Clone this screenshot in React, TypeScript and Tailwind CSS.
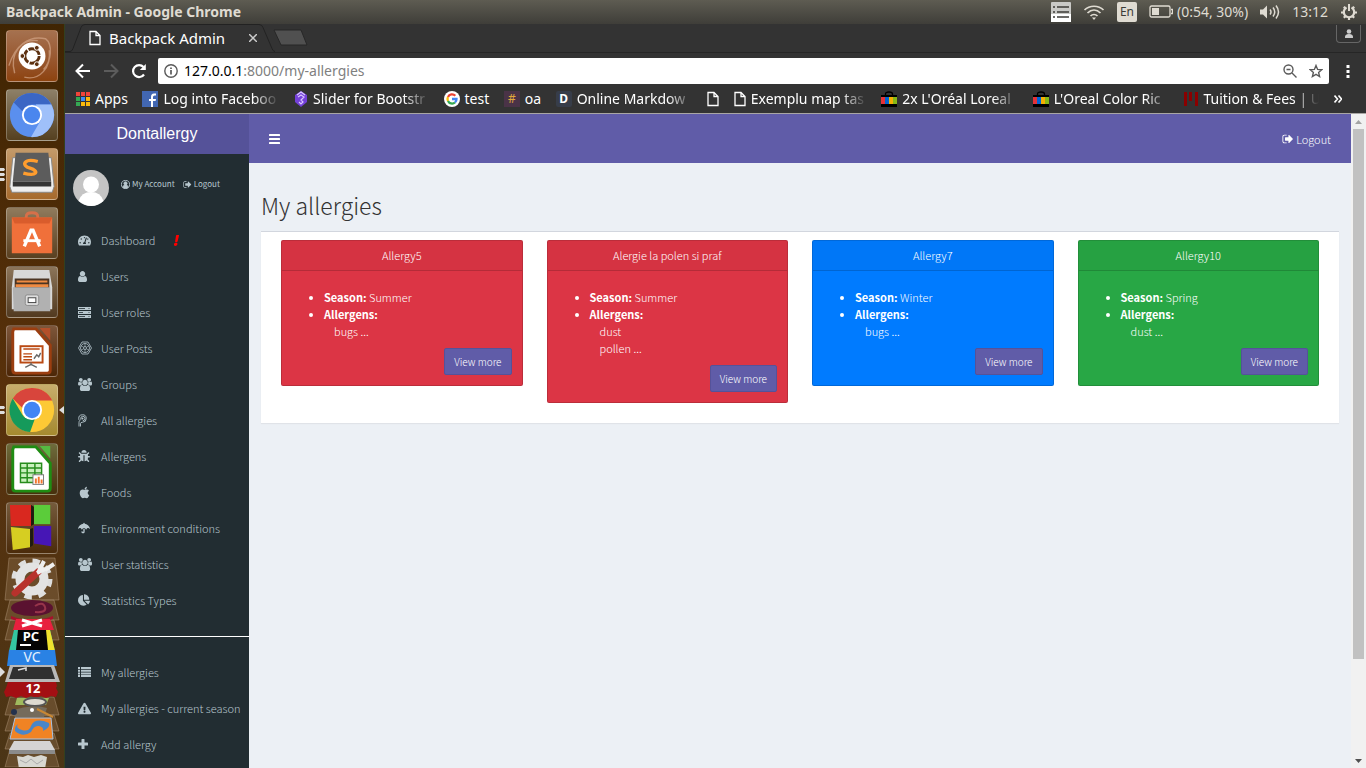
import type { ReactNode } from 'react';
import {
  FaApple,
  FaBug,
  FaChartPie,
  FaExclamation,
  FaExclamationTriangle,
  FaTachometerAlt,
  FaUmbrella,
} from 'react-icons/fa';

const SOURCE = "font-['Noto_Sans_CJK_SC','Noto_Sans',sans-serif]";

/* ---------- glyphs ---------- */

const SignOutIcon = ({ className }: { className: string }) => (
  <svg viewBox="0 0 1792 1792" className={className} fill="currentColor" aria-hidden="true">
    <path d="M704 1440q0 4 1 20t.5 26.5-3 23.5-10 19.5-20.5 6.5h-320q-119 0-203.5-84.5t-84.5-203.5v-704q0-119 84.5-203.5t203.5-84.5h320q13 0 22.5 9.5t9.5 22.5q0 4 1 20t.5 26.5-3 23.5-10 19.5-20.5 6.5h-320q-66 0-113 47t-47 113v704q0 66 47 113t113 47h312l11.5 1 11.5 3 8 5.5 7 9 2 13.5zm928-544q0 26-19 45l-544 544q-19 19-45 19t-45-19-19-45v-288h-448q-26 0-45-19t-19-45v-384q0-26 19-45t45-19h448v-288q0-26 19-45t45-19 45 19l544 544q19 19 19 45z" />
  </svg>
);

const PersonIcon = () => (
  <svg viewBox="256 128 1280 1536" width="9" height="11" fill="currentColor" aria-hidden="true">
    <path d="M1536 1399q0 109-62.5 187t-150.5 78h-854q-88 0-150.5-78t-62.5-187q0-85 8.5-160.5t31.500-152 58.500-131 94-89 134.500-34.500q131 128 313 128t313-128q76 0 134.500 34.500t94 89 58.500 131 31.500 152 8.500 160.500zm-256-887q0 159-112.500 271.500t-271.500 112.500-271.500-112.500-112.500-271.500 112.500-271.500 271.500-112.500 271.500 112.500 112.500 271.500z" />
  </svg>
);

const GroupIcon = () => (
  <svg viewBox="0 0 1920 1792" width="14" height="13" fill="currentColor" aria-hidden="true">
    <path d="M593 896q-162 5-265 128h-134q-82 0-138-40.5t-56-118.5q0-353 124-353 6 0 43.5 21t97.5 42.5 119 21.5q67 0 133-23-5 37-5 66 0 159 81 256zm1071 637q0 120-73 189.5t-194 69.5h-874q-121 0-194-69.5t-73-189.5q0-53 3.5-103.5t14-109 26.5-108.5 43-97.5 62-81 85.5-53.5 111.5-20q10 0 43 21.5t73 48 107 48 135 21.5 135-21.5 107-48 73-48 43-21.5q61 0 111.5 20t85.5 53.5 62 81 43 97.5 26.5 108.5 14 109 3.5 103.5zm-1024-1277q0 106-75 181t-181 75-181-75-75-181 75-181 181-75 181 75 75 181zm704 384q0 159-112.5 271.5t-271.5 112.5-271.5-112.5-112.5-271.5 112.5-271.5 271.5-112.5 271.5 112.5 112.5 271.5zm576 225q0 78-56 118.5t-138 40.5h-134q-103-123-265-128 93-128 93-287 0-29-5-66 66 23 133 23 59 0 119-21.5t97.5-42.5 43.5-21q124 0 124 353zm-128-609q0 106-75 181t-181 75-181-75-75-181 75-181 181-75 181 75 75 181z" />
  </svg>
);

const OrderIcon = () => (
  <svg viewBox="0 0 28 28" width="14" height="14" fill="none" stroke="currentColor" strokeWidth="1.600" aria-hidden="true">
    <path d="M8 2h12l7 12-7 12H8L1 14z" />
    <circle cx="14" cy="14" r="9" />
    <circle cx="14" cy="14" r="3" />
    <path d="M14 5v6M14 17v6M6 10l5 2M17 16l5 2M6 18l5-2M17 12l5-2" strokeWidth="1.200" />
  </svg>
);

const PiperIcon = () => (
  <svg viewBox="0 0 18 26" width="9" height="13" fill="none" stroke="currentColor" strokeWidth="1.800" aria-hidden="true">
    <path d="M2 25v-8q0-3 2-4M5 25v-6q0-2.500 4-2.500a7.500 7.500 0 1 0-7.500-7q0 2 1.500 3.500" />
    <path d="M5.500 11.500q-1-7 4-7 4.500 0 4.500 4.500t-4.500 4.500" />
    <circle cx="9" cy="9" r="2" fill="currentColor" stroke="none" />
  </svg>
);

const ServerIcon = () => (
  <svg viewBox="0 0 13 11" width="13" height="11" fill="currentColor" aria-hidden="true">
    <path d="M0 0h13v3H0zM0 4h13v3H0zM0 8h13v3H0z" />
    <path d="M1 1.500h6M1 5.500h4M1 9.500h6M10.500 1.500h1M10.500 5.500h1M10.500 9.500h1" stroke="#222d32" strokeWidth=".8" />
  </svg>
);

const ListIcon = () => (
  <svg viewBox="0 0 13 10" width="13" height="10" fill="currentColor" aria-hidden="true">
    <path d="M0 0h2v2H0zM3 0h10v2H3zM0 2.700h2v2H0zM3 2.700h10v2H3zM0 5.400h2v2H0zM3 5.400h10v2H3zM0 8h2v2H0zM3 8h10v2H3z" />
  </svg>
);

const PlusIcon = () => (
  <svg viewBox="0 0 10 10" width="10" height="10" fill="currentColor" aria-hidden="true">
    <path d="M4 0h2q.5 0 .5.500v3h3q.5 0 .5.500v2q0 .5-.5.500h-3v3q0 .5-.5.500H4q-.5 0-.5-.5v-3h-3Q0 6.500 0 6V4q0-.5.500-.5h3v-3Q3.500 0 4 0z" />
  </svg>
);

const BarsIcon = () => (
  <svg viewBox="0 0 11 10" width="11" height="10" fill="currentColor" aria-hidden="true">
    <rect width="11" height="2" rx=".5" />
    <rect y="4" width="11" height="2" rx=".5" />
    <rect y="8" width="11" height="2" rx=".5" />
  </svg>
);

const AccountIcon = () => (
  <svg viewBox="0 0 20 20" width="9" height="9" fill="none" stroke="currentColor" strokeWidth="2" aria-hidden="true">
    <circle cx="10" cy="10" r="9" />
    <circle cx="10" cy="7.500" r="3.500" fill="currentColor" />
    <path d="M4 16c1-4 3-5 6-5s5 1 6 5c-3 3-9 3-12 0z" fill="currentColor" />
  </svg>
);

const PageIcon = () => (
  <svg viewBox="0 0 12 16" width="12" height="16" fill="none" stroke="#fff" strokeWidth="1.300" aria-hidden="true">
    <path d="M1 1.500h6l4 4v9H1zM7 1.500v4h4" />
  </svg>
);

/* ---------- system panel ---------- */

function SystemPanel() {
  return (
    <header className="flex h-6 shrink-0 items-center justify-between bg-linear-to-b from-[#5e5c52] to-[#3f3e39] pr-2 pl-[6px] font-['Noto_Sans',sans-serif] text-[#dfdbd2]">
      <span className="text-[14px] leading-6 font-bold">Backpack Admin - Google Chrome</span>
      <div className="flex items-center text-[14px] leading-6">
        <svg viewBox="0 0 20 20" width="20" height="20" aria-hidden="true">
          <rect width="20" height="20" rx="1" fill="#c9c9c6" />
          <rect y="12" width="20" height="8" fill="#fff" />
          <path d="M2 5h2M2 10h2M2 15h2M6 5h12M6 10h12M6 15h12" stroke="#3c3b37" strokeWidth="1.300" />
        </svg>
        <svg viewBox="0 0 22 16" width="22" height="16" className="ml-3" fill="none" stroke="#dfdbd2" strokeWidth="1.700" aria-hidden="true">
          <path d="M1.500 6c5-5 14-5 19 0M4.500 9c4-4 9-4 13 0M7.500 12c2-2 5-2 7 0" />
          <path d="M9 13.500h4L11 16z" fill="#dfdbd2" stroke="none" />
        </svg>
        <span className="ml-3 flex h-5 w-5 items-center justify-center rounded-xs bg-[#dfdbd2] text-[12px] text-[#3c3b37]">En</span>
        <svg viewBox="0 0 24 14" width="24" height="14" className="ml-3" fill="none" stroke="#dfdbd2" strokeWidth="1.300" aria-hidden="true">
          <rect x="1" y="1" width="20" height="11" rx="1.500" />
          <path d="M22 4.500h1.500v4H22" />
          <rect x="3" y="3" width="7" height="7" fill="#dfdbd2" stroke="none" />
        </svg>
        <span className="ml-1">(0:54, 30%)</span>
        <svg viewBox="0 0 20 16" width="20" height="16" className="ml-3" fill="none" stroke="#dfdbd2" strokeWidth="1.500" aria-hidden="true">
          <path d="M0 5.500h3l4-4v13l-4-4H0z" fill="#dfdbd2" stroke="none" />
          <path d="M10 5.500q2 2.500 0 5M13 3.500q3.500 4.500 0 9M16 1.500q5 6.500 0 13" />
        </svg>
        <span className="ml-3">13:12</span>
        <svg viewBox="0 0 18 18" width="18" height="18" className="ml-3" fill="none" stroke="#dfdbd2" aria-hidden="true">
          <path d="M6.500 4.500a5.200 5.200 0 1 0 5 0" strokeWidth="2.200" />
          <path d="M9 1v7" strokeWidth="2" />
          <path d="M3.800 3.800l1.700 1.700M14.200 3.800l-1.700 1.700M1 9.500h2.500M14.500 9.500H17M3.800 14.800l1.700-1.700M14.200 14.800l-1.700-1.700M9 14.500V17" strokeWidth="2.200" />
        </svg>
      </div>
    </header>
  );
}

/* ---------- launcher ---------- */

type TileProps = { tint: string; label: string; children: ReactNode; active?: boolean; windows?: number };

function Tile({ tint, label, children, active = false, windows = 0 }: TileProps) {
  return (
    <button type="button" aria-label={label} className={`relative h-[52px] w-[52px] shrink-0 rounded border border-white/25 bg-linear-to-b ${tint}`}>
      <svg viewBox="0 0 52 52" width="50" height="50">
        {children}
      </svg>
      {windows > 0 && (
        <span className="absolute top-0 -left-[7px] flex h-full flex-col justify-center gap-[2px]">
          {Array.from({ length: windows }, (_, i) => (
            <svg key={i} viewBox="0 0 5 3" width="5" height="3" aria-hidden="true">
              <path d="M0 0h4l1 1.500L4 3H0z" fill="#ddd" />
            </svg>
          ))}
        </span>
      )}
      {active && (
        <svg viewBox="0 0 5 8" width="5" height="8" className="absolute top-[21px] -right-[7px]" aria-hidden="true">
          <path d="M5 0v8L0 4z" fill="#ddd" />
        </svg>
      )}
    </button>
  );
}

function Launcher() {
  return (
    <aside className="flex w-[65px] shrink-0 flex-col items-center gap-[7px] overflow-hidden border-r border-[#33401f] bg-linear-to-b from-[#402503] via-[#59310b] to-[#4b3516] pt-[6px] pr-px">
      <Tile label="Dash" tint="from-[#a5714f] to-[#8d430e]">
        <path d="M2 36C8 16 22 4 40 8c8 6 6 24-2 32M8 44C2 22 16 8 32 10M18 48c16 4 28-10 26-28" stroke="#d3a588" strokeWidth="1.500" fill="none" opacity=".7" />
        <circle cx="26" cy="26" r="14" fill="#fff" />
        <circle cx="26" cy="26" r="7.500" fill="none" stroke="#5c3010" strokeWidth="3" strokeDasharray="14.200 1.500" />
        <circle cx="16" cy="26" r="2.500" fill="#5c3010" stroke="#fff" />
        <circle cx="31" cy="17.500" r="2.500" fill="#5c3010" stroke="#fff" />
        <circle cx="31" cy="34.500" r="2.500" fill="#5c3010" stroke="#fff" />
      </Tile>
      <Tile label="Chromium" tint="from-[#8d8068] to-[#55401f]">
        <circle cx="26" cy="26" r="23" fill="#5a8fee" />
        <path d="M26 3a23 23 0 0 1 20 12H26a11 11 0 0 0-10 7L7 13A23 23 0 0 1 26 3z" fill="#3b66c4" />
        <path d="M46 15H30l6 15-11 19a23 23 0 0 0 21-34z" fill="#9fc0fa" />
        <circle cx="26" cy="26" r="10.500" fill="#fff" />
        <circle cx="26" cy="26" r="8.500" fill="#4a86ee" />
      </Tile>
      <Tile label="Text editor" tint="from-[#c39a6a] to-[#a66a2c]" windows={3}>
        <path d="M6 9h40l3 30-2 6H5l-2-6z" fill="#eee" stroke="#888" />
        <path d="M9 4h34l3 30H6z" fill="#5c5c5c" />
        <path d="M6 34h40v5H6z" fill="#343434" />
        <path d="M32 13c-14-4-18 4-8 7s7 9-7 5" fill="none" stroke="#ff9d2e" strokeWidth="3.500" />
      </Tile>
      <Tile label="Software" tint="from-[#907b5d] to-[#594020]">
        <path d="M20 17V9q0-4 6-4t6 4v8" fill="none" stroke="#d6704a" strokeWidth="3" />
        <path d="M5 10h42v37H5z" fill="#f0703a" />
        <path d="M5 10h42l-3 6H8z" fill="#d95c2c" />
        <path d="M18 40l7-17h2l7 17" fill="none" stroke="#fff" strokeWidth="3.500" />
        <path d="M17 34h18" stroke="#fff" strokeWidth="3" />
      </Tile>
      <Tile label="Files" tint="from-[#8c755a] to-[#523a20]">
        <path d="M7 3h37l3 18v23H5V21z" fill="#d8d8d8" />
        <path d="M8 12h36v10H8z" fill="#4b3423" />
        <path d="M10 14h32v2H10zM9 18h34v3H9z" fill="#ef8b43" />
        <path d="M6 21h39v25H7z" fill="#b1b1b1" />
        <rect x="19" y="29" width="14" height="11" rx="2" fill="#ddd" stroke="#8a8a8a" />
        <rect x="22" y="32" width="8" height="5" fill="#fff" stroke="#444" />
      </Tile>
      <Tile label="Impress" tint="from-[#7d563a] to-[#4c2606]">
        <path d="M7 3h23l15 17v26q0 3-3 3H9q-3 0-3-3V6z" fill="#fff" stroke="#9b3e10" strokeWidth="3" />
        <path d="M34 2h11v13z" fill="#b4502a" />
        <rect x="14" y="21" width="23" height="17" fill="#fff" stroke="#ba4a14" strokeWidth="2" />
        <path d="M17 24h17M17 29h9M17 32h9M17 35h9" stroke="#ba4a14" strokeWidth="1.500" />
        <path d="M28 34l3-4 2 2 2-4M25 38v3M25 40l-6 3M25 40l6 3" stroke="#686868" fill="none" strokeWidth="1.500" />
      </Tile>
      <Tile label="Chrome" tint="from-[#c7ad6c] to-[#a58a2e]" active windows={2}>
        <circle cx="26" cy="26" r="23" fill="#fdc935" />
        <path d="M26 3a23 23 0 0 1 21 13H26a10 10 0 0 0-10 8L6 14A23 23 0 0 1 26 3z" fill="#d8453c" />
        <path d="M6 14l10 17q4 6 13 4L24 49A23 23 0 0 1 6 14z" fill="#159a5b" />
        <circle cx="26" cy="26" r="10.500" fill="#fff" />
        <circle cx="26" cy="26" r="8.500" fill="#4285f4" />
      </Tile>
      <Tile label="Calc" tint="from-[#6e6c3c] to-[#47300c]">
        <path d="M7 3h23l15 17v26q0 3-3 3H9q-3 0-3-3V6z" fill="#fff" stroke="#1f8c13" strokeWidth="3" />
        <path d="M34 2h11v13z" fill="#55b941" />
        <path d="M14 20h22v20H14zM14 25h22M14 30h22M14 35h22M21 20v20M29 20v20" fill="#c9f1bd" stroke="#268c1c" strokeWidth="1.500" />
        <rect x="27" y="32" width="11" height="10" fill="#fff" stroke="#777" />
        <path d="M30 41v-5M33 41v-7M36 41v-4" stroke="#f2752c" strokeWidth="2" />
      </Tile>
      <Tile label="Code editor" tint="from-[#755b3c] to-[#4b2b0a]">
        <path d="M3 2h22v22H4z" fill="#d9281f" />
        <path d="M28 2h17v20H28z" fill="#5bcc3a" />
        <path d="M4 25l20 2v19L6 49z" fill="#d6ce22" />
        <path d="M28 24h18v21l-18-3z" fill="#4616b5" />
        <path d="M25 2l3 2v18l-3 2zM24 27l3-1v18l-3 2z" fill="#1e1a10" />
      </Tile>
      <svg viewBox="-5 0 64 210" width="64" height="210" className="-mt-1 shrink-0" role="img" aria-label="More applications">
        <g fill="#8a6a4a" fillOpacity=".45" stroke="#b49a7c" strokeOpacity=".45">
          <path d="M4 1h46l4 42H0z" />
          <path d="M5 43h44l5 20H0zM5 63h44l5 20H0zM5 140h44l5 18H0zM5 158h44l5 16H0zM5 176h44l5 16H0zM5 192h44l5 18H0z" />
        </g>
        <circle cx="27" cy="22" r="17" fill="none" stroke="#dedede" strokeWidth="7" strokeDasharray="7 6.350" />
        <circle cx="27" cy="22" r="12" fill="none" stroke="#e3e3e3" strokeWidth="9" />
        <path d="M10 36L33 15" stroke="#b8322c" strokeWidth="7" strokeLinecap="round" />
        <path d="M33 16l6-12M40 13l9-6M32 16l8-4" stroke="#efefef" strokeWidth="4" />
        <ellipse cx="27" cy="51" rx="21" ry="8" fill="#5a1230" />
        <path d="M30 49q8-5 10 1t-10 5" fill="none" stroke="#97344a" strokeWidth="2" />
        <path d="M6 59q21 8 42 0v3q-21 8-42 0z" fill="#a5122b" />
        <path d="M11 62h34l4 11H8z" fill="#e8203e" />
        <path d="M17 63l20 6M37 63l-20 6" stroke="#fff" strokeWidth="3" />
        <path d="M9 73h36l5 21H4z" fill="#34c5a0" />
        <path d="M30 73h15l5 21H30z" fill="#efe22e" />
        <path d="M13 73h28l2 20H11z" fill="#050505" />
        <text x="26" y="84" textAnchor="middle" fontSize="13" fontWeight="bold" fill="#fff" fontFamily="Noto Sans">PC</text>
        <path d="M15 88h11" stroke="#fff" strokeWidth="2" />
        <path d="M4 93h46l2 16H2z" fill="#2a82e4" />
        <text x="27" y="105" textAnchor="middle" fontSize="14" fill="#e6f2ff" fontFamily="Noto Sans">VC</text>
        <path d="M5 108h44l6 17H0z" fill="#b8b8b8" />
        <path d="M8 110h38l4 12H4z" fill="#303030" />
        <path d="M13 113l8-2v3" stroke="#ddd" strokeWidth="1.500" fill="none" />
        <path d="M-5 110l5 5-5 5z" fill="#ddd" />
        <path d="M3 125h48l1 4-1 2 2 4-2 5-5-1-5 2-5-2-5 2-5-2-5 2-5-2-5 2-5-2-5 1-2-5 2-4z" fill="#a30f13" />
        <text x="28" y="136" textAnchor="middle" fontSize="13" fontWeight="bold" fill="#fff" fontFamily="Noto Sans">12</text>
        <path d="M12 141h32l-3 7H10z" fill="#9fba5e" />
        <ellipse cx="30" cy="145" rx="11" ry="4" fill="#dedad0" stroke="#555" strokeWidth="2" />
        <path d="M6 154q20-7 36-3l-3 9H10z" fill="#756b5c" />
        <circle cx="9" cy="155" r="3" fill="#24324e" />
        <circle cx="27" cy="153" r="2" fill="#fff" />
        <path d="M32 152l16 8" stroke="#c78734" strokeWidth="2" />
        <path d="M10 161h36l2 21H5z" fill="#f08324" stroke="#a8c4e4" />
        <path d="M44 166q-14-6-18 3-2 6-9 4t-4-6q-4 3-3 7 8 7 16 1 3-7 8-6t4 5q8-4 6-8z" fill="#4a86c8" />
        <path d="M9 184h36l5 9H4z" fill="#d4d4d4" />
        <path d="M4 193h46v4H4z" fill="#8b8b8b" />
        <path d="M12 199l6 1 5-2 6 2 7-2 6 2-2 12H14z" fill="#d8d8d2" />
        <path d="M15 203l6 3 5-4 6 5 6-4" fill="none" stroke="#aaa" />
      </svg>
    </aside>
  );
}

/* ---------- browser chrome ---------- */

function TabStrip() {
  return (
    <div className="flex h-[29px] shrink-0 items-end justify-between border-b border-[#262626] bg-[#333]">
      <div className="flex items-center">
        <div className="relative flex h-7 items-center pr-2 pl-6">
          <svg viewBox="0 0 212 28" width="212" height="28" className="absolute top-0 left-0" fill="none" stroke="#222" aria-hidden="true">
            <path d="M0 27.500h5q2 0 3-3l8-21q1-3 4-3h174q3 0 4 3l9 21q1 3 3 3" />
          </svg>
          <PageIcon />
          <span className="ml-2 w-[136px] text-[15px] leading-7 text-white">Backpack Admin</span>
          <button type="button" aria-label="Close tab" className="flex h-4 w-4 items-center justify-center">
            <svg viewBox="0 0 8 8" width="8" height="8" stroke="#ccc" strokeWidth="1.500">
              <path d="M0 0l8 8M8 0L0 8" />
            </svg>
          </button>
        </div>
        <button type="button" aria-label="New tab" className="ml-1">
          <svg viewBox="0 0 36 18" width="36" height="18">
            <path d="M1 1h27l6 15H8z" fill="#505050" stroke="#272727" />
          </svg>
        </button>
      </div>
      <button type="button" aria-label="Profile" className="mr-[5px] mb-[9px] flex h-[18px] w-[25px] items-center justify-center rounded-b border border-t-0 border-[#666]">
        <svg viewBox="0 0 10 10" width="10" height="10" fill="#ccc">
          <circle cx="5" cy="2.500" r="2.300" />
          <path d="M1 9q-.5-4 4-4t4 4z" />
        </svg>
      </button>
    </div>
  );
}

function Toolbar() {
  return (
    <div className="flex h-9 shrink-0 items-center bg-[#333] pr-4 pl-[10px]">
      <button type="button" aria-label="Back" className="mr-3 h-4 w-4">
        <svg viewBox="0 0 16 16" width="16" height="16" fill="none" stroke="#fff" strokeWidth="2">
          <path d="M15 8H2M8 1.500L1.500 8 8 14.500" />
        </svg>
      </button>
      <button type="button" aria-label="Forward" className="mr-3 h-4 w-4">
        <svg viewBox="0 0 16 16" width="16" height="16" fill="none" stroke="#5c5c5c" strokeWidth="2">
          <path d="M1 8h13M8 1.500L14.500 8 8 14.500" />
        </svg>
      </button>
      <button type="button" aria-label="Reload" className="mr-[11px] h-4 w-4">
        <svg viewBox="0 0 16 16" width="16" height="16" fill="none" stroke="#fff" strokeWidth="2.200">
          <path d="M13 11.500A6 6 0 1 1 12.500 4" />
          <path d="M14.800 1v6h-6z" fill="#fff" stroke="none" />
        </svg>
      </button>
      <form className="flex h-[26px] min-w-0 grow items-center rounded-xs bg-white px-[6px]">
        <svg viewBox="0 0 14 14" width="14" height="14" fill="none" stroke="#5a5a5a" strokeWidth="1.400" aria-hidden="true">
          <circle cx="7" cy="7" r="6.200" />
          <path d="M7 6v4.500M7 3.400v1.500" strokeWidth="1.700" />
        </svg>
        <p className="ml-[6px] grow text-[14px] leading-[26px] text-[#808080]">
          <span className="text-black">127.0.0.1</span>:8000/my-allergies
        </p>
        <svg viewBox="0 0 14 14" width="14" height="14" fill="none" stroke="#5a5a5a" strokeWidth="1.400" aria-hidden="true">
          <circle cx="5.500" cy="5.500" r="4.500" />
          <path d="M9 9l4.500 4.500M3.500 5.500h4" />
        </svg>
        <svg viewBox="0 0 14 14" width="14" height="14" className="ml-3" fill="none" stroke="#5a5a5a" strokeWidth="1.400" aria-hidden="true">
          <path d="M7 1.500l1.600 3.900 4.200.3-3.200 2.700 1 4.100L7 10.300l-3.600 2.200 1-4.100L1.200 5.700l4.200-.3z" />
        </svg>
      </form>
      <button type="button" aria-label="Menu" className="ml-[17px] h-4 w-1">
        <svg viewBox="0 0 4 16" width="4" height="16" fill="#fff">
          <path d="M.5 2h3v3h-3zM.5 7h3v3h-3zM.5 12h3v3h-3z" />
        </svg>
      </button>
    </div>
  );
}

const BagIcon = () => (
  <svg viewBox="0 0 16 16" width="16" height="16" aria-hidden="true">
    <path d="M4.500 5V3q0-2 3.500-2t3.500 2v2" fill="none" stroke="#000" strokeWidth="1.300" />
    <path d="M0 4h16v12H0z" fill="#000" />
    <path d="M0 6h4v7H0z" fill="#e53238" />
    <path d="M4 6h4v7H4z" fill="#0064d2" />
    <path d="M8 6h4v7H8z" fill="#f5af02" />
    <path d="M12 6h4v7h-4z" fill="#86b817" />
  </svg>
);

const AppsIcon = () => (
  <svg viewBox="0 0 14 14" width="14" height="14" aria-hidden="true">
    <path d="M0 0h4v4H0zM5 0h4v4H5zM10 0h4v4h-4z" fill="#f0443a" />
    <path d="M0 5h4v4H0zM0 10h4v4H0z" fill="#35a853" />
    <path d="M5 5h4v4H5z" fill="#3c8bf5" />
    <path d="M10 5h4v4h-4zM5 10h4v4H5zM10 10h4v4h-4z" fill="#fbb90a" />
  </svg>
);

const FacebookIcon = () => (
  <svg viewBox="0 0 16 16" width="16" height="16" aria-hidden="true">
    <path d="M0 0h16v16H0z" fill="#4267b2" />
    <path d="M9 16v-6H7V8h2V6q0-3.500 3-3.500h2v2h-1.500Q11 4.500 11 6v2h3l-.4 2H11v6z" fill="#fff" />
  </svg>
);

const SliderIcon = () => (
  <svg viewBox="0 0 14 16" width="14" height="16" aria-hidden="true">
    <path d="M7 0l6 4v7l-6 5-6-5V4z" fill="#7440d8" />
    <path d="M4 6l3-2 3 2-3 3 2 2-2 2-2-2M3 4l4-3 4 3" fill="none" stroke="#d9c6ff" strokeWidth="1.200" />
  </svg>
);

const GoogleIcon = () => (
  <svg viewBox="0 0 16 16" width="16" height="16" fill="none" strokeWidth="2.300" aria-hidden="true">
    <circle cx="8" cy="8" r="8" fill="#fff" />
    <path d="M11.300 4.800A4.500 4.500 0 0 0 4 6" stroke="#ea4335" />
    <path d="M4 6a4.500 4.500 0 0 0 0 4" stroke="#fbbc05" />
    <path d="M4 10a4.500 4.500 0 0 0 7 1.500" stroke="#34a853" />
    <path d="M11 11.500A4.500 4.500 0 0 0 12.500 8H8" stroke="#4285f4" />
  </svg>
);

const FeesIcon = () => (
  <svg viewBox="0 0 14 16" width="14" height="16" fill="#8b0000" aria-hidden="true">
    <path d="M0 1h3v14H0zM5 1h3v9H5zM11 1h3v14h-3z" />
  </svg>
);

const bookmarks: { icon: ReactNode; text: string; name: string; fade: boolean }[] = [
  { icon: <AppsIcon />, text: 'Apps', name: 'Apps', fade: false },
  { icon: <FacebookIcon />, text: 'Log into Faceboo', name: 'Facebook', fade: true },
  { icon: <SliderIcon />, text: 'Slider for Bootstr', name: 'Slider', fade: true },
  { icon: <GoogleIcon />, text: 'test', name: 'test', fade: false },
  {
    icon: <span className="flex h-4 w-4 items-center justify-center bg-[#4a3347] text-[12px] leading-4 text-[#e0a93c]">#</span>,
    text: 'oa',
    name: 'oa',
    fade: false,
  },
  {
    icon: <span className="flex h-4 w-4 items-center justify-center rounded-xs bg-[#373d49] text-[12px] leading-4 font-bold text-white">D</span>,
    text: 'Online Markdow',
    name: 'Markdown',
    fade: true,
  },
  { icon: <PageIcon />, text: '', name: 'Untitled', fade: false },
  { icon: <PageIcon />, text: 'Exemplu map tas', name: 'Map', fade: true },
  { icon: <BagIcon />, text: "2x L'Oréal Loreal", name: 'Loreal', fade: true },
  { icon: <BagIcon />, text: "L'Oreal Color Ric", name: 'Color', fade: true },
  { icon: <FeesIcon />, text: 'Tuition & Fees | U', name: 'Fees', fade: true },
];

function BookmarksBar() {
  return (
    <nav aria-label="Bookmarks" className="flex h-[25px] shrink-0 items-center justify-between border-b border-[#a9a6a4] bg-[#333] pr-6 pb-1 pl-[11px]">
      {bookmarks.map((b) => (
        <a key={b.name} href="#" aria-label={b.name} className="flex items-center gap-[5px] text-[14px] leading-5 whitespace-nowrap text-white">
          {b.icon}
          {b.text && (
            <span className={b.fade ? 'w-[116px] [mask-image:linear-gradient(to_right,#000_78%,transparent)]' : ''}>{b.text}</span>
          )}
        </a>
      ))}
      <button type="button" aria-label="More bookmarks" className="flex h-2 w-2 items-center">
        <svg viewBox="0 0 8 8" width="8" height="8" fill="none" stroke="#fff" strokeWidth="1.600">
          <path d="M.5.500L3.500 4l-3 3.500M4.500.500l3 3.500-3 3.500" />
        </svg>
      </button>
    </nav>
  );
}

/* ---------- application ---------- */

const mainMenu: { label: string; icon: ReactNode; alert?: boolean }[] = [
  { label: 'Dashboard', icon: <FaTachometerAlt size={13} />, alert: true },
  { label: 'Users', icon: <PersonIcon /> },
  { label: 'User roles', icon: <ServerIcon /> },
  { label: 'User Posts', icon: <OrderIcon /> },
  { label: 'Groups', icon: <GroupIcon /> },
  { label: 'All allergies', icon: <PiperIcon /> },
  { label: 'Allergens', icon: <FaBug size={12} /> },
  { label: 'Foods', icon: <FaApple size={13} /> },
  { label: 'Environment conditions', icon: <FaUmbrella size={12} /> },
  { label: 'User statistics', icon: <GroupIcon /> },
  { label: 'Statistics Types', icon: <FaChartPie size={12} /> },
];

const personalMenu: { label: string; icon: ReactNode; alert?: boolean }[] = [
  { label: 'My allergies', icon: <ListIcon /> },
  { label: 'My allergies - current season', icon: <FaExclamationTriangle size={13} /> },
  { label: 'Add allergy', icon: <PlusIcon /> },
];

function Menu({ items, label }: { items: typeof mainMenu; label: string }) {
  return (
    <nav aria-label={label}>
      <ul>
        {items.map((item) => (
          <li key={item.label}>
            <a href="#" className="flex h-9 items-center pl-[13px] text-[11px] leading-4 font-light whitespace-nowrap text-[#b8c7ce]">
              <span className="w-[23px]">{item.icon}</span>
              {item.label}
              {item.alert && <FaExclamation size={11} color="#f00" className="ml-4 -skew-x-12" />}
            </a>
          </li>
        ))}
      </ul>
    </nav>
  );
}

function Sidebar() {
  return (
    <aside className="flex w-[184px] shrink-0 flex-col overflow-hidden bg-[#222d32]">
      <a href="#" className="h-10 shrink-0 bg-[#555299] text-center font-['Liberation_Sans',sans-serif] text-[16px] leading-10 text-white">
        Dontallergy
      </a>
      <div className="my-4 flex h-9 shrink-0 items-start gap-3 pl-2">
        <svg viewBox="0 0 36 36" width="36" height="36" role="img" aria-label="Avatar">
          <circle cx="18" cy="18" r="18" fill="#c4c4c4" />
          <circle cx="18" cy="14.500" r="8" fill="#fff" />
          <path d="M5.500 31q3-9 12.500-9t12.500 9q-12 10-25 0z" fill="#fff" />
        </svg>
        <div className="mt-[7px] flex gap-2 text-[8px] leading-[14px] text-[#b8c7ce]">
          <a href="#" className="flex items-center gap-[2px]">
            <AccountIcon />
            My Account
          </a>
          <a href="#" className="flex items-center gap-[2px]">
            <SignOutIcon className="h-[9px] w-[9px]" />
            Logout
          </a>
        </div>
      </div>
      <Menu items={mainMenu} label="Administration" />
      <hr className="mt-[18px] mb-[17px] border-white" />
      <Menu items={personalMenu} label="Personal" />
    </aside>
  );
}

type Allergy = { name: string; season: string; allergens: string[]; tone: string };

const allergies: Allergy[] = [
  { name: 'Allergy5', season: 'Summer', allergens: ['bugs ...'], tone: 'bg-[#dc3545]' },
  { name: 'Alergie la polen si praf', season: 'Summer', allergens: ['dust', 'pollen ...'], tone: 'bg-[#dc3545]' },
  { name: 'Allergy7', season: 'Winter', allergens: ['bugs ...'], tone: 'bg-[#007bff]' },
  { name: 'Allergy10', season: 'Spring', allergens: ['dust ...'], tone: 'bg-[#28a745]' },
];

function AllergyCard({ name, season, allergens, tone }: Allergy) {
  return (
    <article className={`rounded-xs border border-black/15 text-[11px] leading-[17px] font-light text-white ${tone}`}>
      <h2 className="border-b border-black/15 bg-black/3 py-[6px] text-center">{name}</h2>
      <div className="flex flex-col px-[10px] pt-[18px] pb-[10px]">
        <ul className="list-disc pl-8">
          <li>
            <b className="font-bold">Season:</b> {season}
          </li>
          <li>
            <b className="font-bold">Allergens:</b>
            <ul className="pl-[10px]">
              {allergens.map((a) => (
                <li key={a} className="list-none">
                  {a}
                </li>
              ))}
            </ul>
          </li>
        </ul>
        <button type="button" className="mt-2 self-end rounded-xs border border-[#555299] bg-[#605ca8] px-[9px] py-1 text-[10px] leading-[17px] font-light">
          View more
        </button>
      </div>
    </article>
  );
}

function Content() {
  return (
    <div className="flex min-w-0 grow flex-col bg-[#ecf0f5]">
      <header className="flex h-[49px] shrink-0 items-center justify-between bg-[#605ca8] px-5 text-white">
        <button type="button" aria-label="Toggle navigation">
          <BarsIcon />
        </button>
        <a href="#" className="flex items-center gap-[2px] text-[11px] leading-4 font-light">
          <SignOutIcon className="h-3 w-3" />
          Logout
        </a>
      </header>
      <main className="px-3">
        <h1 className="mt-6 text-[23px] leading-9 font-light text-[#333]">My allergies</h1>
        <section className="mt-2 grid grid-cols-4 items-start gap-6 border-t border-[#d2d6de] bg-white px-5 pt-2 pb-5 shadow-[0_1px_1px_rgba(0,0,0,0.05)]">
          {allergies.map((a) => (
            <AllergyCard key={a.name} {...a} />
          ))}
        </section>
      </main>
    </div>
  );
}

function PageScrollbar() {
  return (
    <div className="flex w-[15px] shrink-0 flex-col bg-[#f1f1f1]" aria-hidden="true">
      <svg viewBox="0 0 15 15" width="15" height="15" className="shrink-0">
        <path d="M4 10l3.500-4L11 10z" fill="#a3a3a3" />
      </svg>
      <div className="min-h-0 grow px-[2px]">
        <div className="h-[85%] bg-[#c1c1c1]" />
      </div>
      <svg viewBox="0 0 15 15" width="15" height="15" className="shrink-0">
        <path d="M4 6l3.500 4L11 6z" fill="#505050" />
      </svg>
    </div>
  );
}

export default function App() {
  return (
    <div className="flex h-screen flex-col overflow-hidden">
      <SystemPanel />
      <div className="flex min-h-0 grow">
        <Launcher />
        <div className="flex min-w-0 grow flex-col font-['Noto_Sans',sans-serif]">
          <TabStrip />
          <Toolbar />
          <BookmarksBar />
          <div className={`flex min-h-0 grow ${SOURCE}`}>
            <Sidebar />
            <Content />
            <PageScrollbar />
          </div>
        </div>
      </div>
    </div>
  );
}
